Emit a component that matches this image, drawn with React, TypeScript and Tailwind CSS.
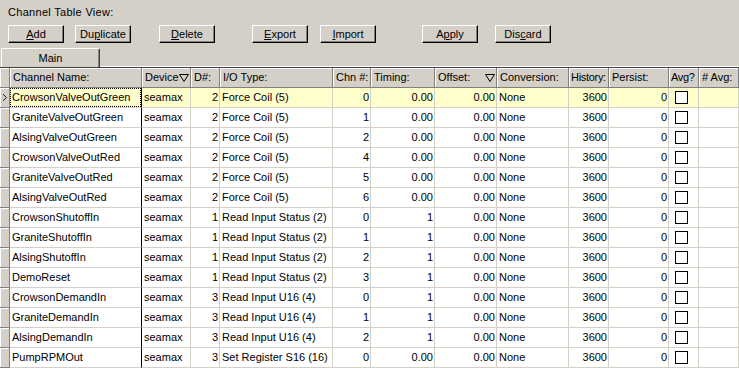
import React from 'react'

type Align = 'l' | 'r' | 'c'

interface Col {
  title: string
  w: string
  align: Align
  filter?: boolean
  tight?: boolean
}

const cols: Col[] = [
  { title: 'Channel Name:', w: 'w-[132px]', align: 'l' },
  { title: 'Device', w: 'w-[49px]', align: 'l', filter: true },
  { title: 'D#:', w: 'w-[29px]', align: 'r' },
  { title: 'I/O Type:', w: 'w-[113px]', align: 'l' },
  { title: 'Chn #:', w: 'w-[38px]', align: 'r' },
  { title: 'Timing:', w: 'w-[64px]', align: 'r' },
  { title: 'Offset:', w: 'w-[62px]', align: 'r', filter: true },
  { title: 'Conversion:', w: 'w-[72px]', align: 'l' },
  { title: 'History:', w: 'w-[40px]', align: 'r', tight: true },
  { title: 'Persist:', w: 'w-[60px]', align: 'r' },
  { title: 'Avg?', w: 'w-[30px]', align: 'c', tight: true },
  { title: '# Avg:', w: 'w-[40px]', align: 'l' },
]

// name, device id, io type, channel, timing
const rows: [string, string, string, string, string][] = [
  ['CrowsonValveOutGreen', '2', 'Force Coil (5)', '0', '0.00'],
  ['GraniteValveOutGreen', '2', 'Force Coil (5)', '1', '0.00'],
  ['AlsingValveOutGreen', '2', 'Force Coil (5)', '2', '0.00'],
  ['CrowsonValveOutRed', '2', 'Force Coil (5)', '4', '0.00'],
  ['GraniteValveOutRed', '2', 'Force Coil (5)', '5', '0.00'],
  ['AlsingValveOutRed', '2', 'Force Coil (5)', '6', '0.00'],
  ['CrowsonShutoffIn', '1', 'Read Input Status (2)', '0', '1'],
  ['GraniteShutoffIn', '1', 'Read Input Status (2)', '1', '1'],
  ['AlsingShutoffIn', '1', 'Read Input Status (2)', '2', '1'],
  ['DemoReset', '1', 'Read Input Status (2)', '3', '1'],
  ['CrowsonDemandIn', '3', 'Read Input U16 (4)', '0', '1'],
  ['GraniteDemandIn', '3', 'Read Input U16 (4)', '1', '1'],
  ['AlsingDemandIn', '3', 'Read Input U16 (4)', '2', '1'],
  ['PumpRPMOut', '3', 'Set Register S16 (16)', '0', '0.00'],
]

function Btn({ label, ml }: { label: React.ReactNode; ml: string }): React.JSX.Element {
  return (
    <div
      className={`${ml} w-[56px] h-[18px] shrink-0 flex items-center justify-center border border-t-white border-l-white border-r-black border-b-black shadow-[inset_-1px_-1px_0_#808080]`}
    >
      {label}
    </div>
  )
}

function FilterIcon(): React.JSX.Element {
  return (
    <svg width="10" height="8" viewBox="0 0 10 8" className="shrink-0">
      <polygon points="0.5,0.5 9.5,0.5 5,7.5" fill="none" stroke="#000" strokeWidth="1" />
    </svg>
  )
}

export default function App(): React.JSX.Element {
  return (
    <div className="w-[739px] h-[368px] overflow-hidden bg-[#d4d0c8] text-black text-[11px] font-['Liberation_Sans',Arial,sans-serif] flex flex-col">
      <div className="h-[25px] pl-[8px] pt-[5px] leading-[14px] shrink-0 tracking-[0.3px]">Channel Table View:</div>

      <div className="h-[18px] flex shrink-0 leading-[13px]">
        <Btn ml="ml-[8px]" label={<span><u>A</u>dd</span>} />
        <Btn ml="ml-[11px]" label={<span>Du<u>p</u>licate</span>} />
        <Btn ml="ml-[28px]" label={<span><u>D</u>elete</span>} />
        <Btn ml="ml-[37px]" label={<span><u>E</u>xport</span>} />
        <Btn ml="ml-[12px]" label={<span><u>I</u>mport</span>} />
        <Btn ml="ml-[46px]" label={<span>A<u>p</u>ply</span>} />
        <Btn ml="ml-[17px]" label={<span>Dis<u>c</u>ard</span>} />
      </div>

      <div className="h-[5px] shrink-0" />

      <div className="h-[19px] flex shrink-0">
        <div className="ml-[1px] w-[99px] h-[19px] flex items-center justify-center border-t border-l border-r border-t-white border-l-white border-r-[#404040] rounded-t-[2px] shadow-[inset_-1px_0_0_#808080]">
          Main
        </div>
        <div className="flex-1 border-b border-white" />
      </div>

      <div className="flex flex-col border-t border-[#404040] bg-white">
        <div className="h-[20px] flex shrink-0 bg-[#d4d0c8]">
          <div className="w-[10px] h-full shrink-0 border-r border-b border-[#808080] shadow-[inset_1px_1px_0_#ffffff]" />
          {cols.map((c, i) => (
            <div
              key={i}
              className={`${c.w} h-full shrink-0 flex items-center justify-between ${c.tight ? 'pl-[2px] tracking-[-0.3px]' : 'pl-[3px]'} pr-[1px] border-r border-b border-[#808080] shadow-[inset_1px_1px_0_#ffffff] overflow-hidden whitespace-nowrap`}
            >
              <span className="overflow-hidden">{c.title}</span>
              {c.filter && <FilterIcon />}
            </div>
          ))}
        </div>

        {rows.map((r, ri) => {
          const sel = ri === 0
          const vals = [r[0], 'seamax', r[1], r[2], r[3], r[4], '0.00', 'None', '3600', '0', '', '']
          return (
            <div key={ri} className={`h-[20px] flex shrink-0 ${sel ? 'bg-[#ffffcc]' : 'bg-white'}`}>
              <div className="w-[10px] h-full shrink-0 flex items-center bg-[#d4d0c8] border-r border-b border-[#808080] shadow-[inset_1px_1px_0_#ffffff]">
                {sel && (
                  <svg width="8" height="9" viewBox="0 0 8 9" className="ml-[2px]">
                    <polyline points="1,0.5 5,4.5 1,8.5" fill="none" stroke="#000" strokeWidth="1" />
                  </svg>
                )}
              </div>
              {cols.map((c, ci) => {
                const base = `${c.w} h-full shrink-0 flex items-center overflow-hidden whitespace-nowrap border-b border-[#d4d0c8] border-r`
                const bc = ci === 0 ? 'border-r-black' : 'border-r-[#d4d0c8]'
                if (c.align === 'c') {
                  return (
                    <div key={ci} className={`${base} ${bc} pl-[6px]`}>
                      <div className="w-[13px] h-[13px] bg-white border border-black" />
                    </div>
                  )
                }
                const al = c.align === 'r' ? 'justify-end pr-[1px]' : 'justify-start pl-[2px]'
                return (
                  <div key={ci} className={`${base} ${bc} ${al} relative`}>
                    {sel && ci === 0 && (
                      <div className="absolute inset-0 border border-dotted border-black" />
                    )}
                    {vals[ci]}
                  </div>
                )
              })}
            </div>
          )
        })}
      </div>
    </div>
  )
}
